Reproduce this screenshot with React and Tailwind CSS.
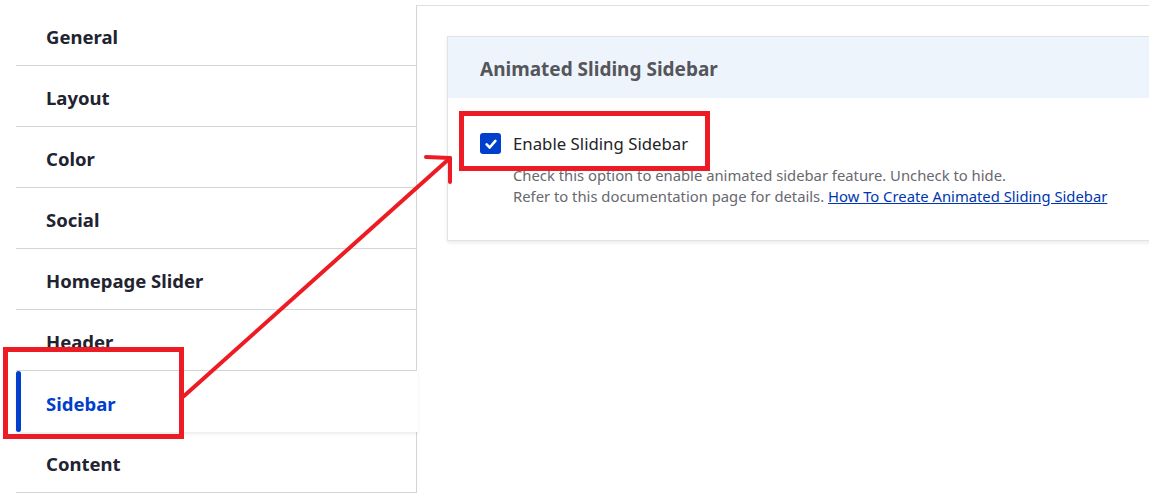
import React from "react";

const tabs = ["General", "Layout", "Color", "Social", "Homepage Slider", "Header", "Sidebar", "Content"];

function Annotations() {
  return (
    <svg className="absolute inset-0 z-20 pointer-events-none" width="1149" height="499" viewBox="0 0 1149 499">
      <g fill="none" stroke="#ed1c24" strokeLinejoin="miter">
        <rect x="5.5" y="349.5" width="176" height="87" strokeWidth="5" />
        <rect x="461.5" y="113.5" width="246" height="55" strokeWidth="5" />
        <path d="M184 396 L450 158" strokeWidth="4" strokeLinecap="round" />
        <path d="M426 157 L450 158 L450 182" strokeWidth="4" strokeLinecap="round" strokeLinejoin="round" />
      </g>
    </svg>
  );
}

export default function App() {
  const active = "Sidebar";
  return (
    <div
      className="relative flex w-[1149px] h-[499px] overflow-hidden bg-white"
      style={{ fontFamily: '"Noto Sans", "Open Sans", sans-serif' }}
    >
      <nav className="w-[417px] shrink-0 pl-4 pt-[5px]">
        {tabs.map((t) => {
          const isActive = t === active;
          return (
            <div
              key={t}
              className={
                isActive
                  ? "relative h-[61px] flex items-center pl-[30px] bg-white text-[#003ecc] shadow-[0_2px_3px_rgba(0,0,0,0.08)] z-10 -mr-px"
                  : "h-[61px] flex items-center pl-[30px] border-b border-r border-[#d4d4da] text-[#222330]"
              }
            >
              {isActive && <span className="absolute left-0 top-0 bottom-0 w-[5px] rounded-sm bg-[#003ecc]" />}
              <span className="text-[18.5px] font-bold pt-[4px]">{t}</span>
            </div>
          );
        })}
      </nav>

      <main className="flex-1 mt-[5px] border-t border-[#dedee3] pl-[30px] pt-[30px] -mr-8">
        <section className="border border-[#e2e2e8] shadow-[0_2px_4px_rgba(0,0,0,0.08)] bg-white">
          <header className="h-[61px] flex items-center px-8 pt-1 bg-[#edf4fc]">
            <h2 className="text-[19px] font-bold text-[#55565b]">Animated Sliding Sidebar</h2>
          </header>
          <div className="px-8 pt-[33px] pb-[33px]">
            <label className="flex items-center gap-3">
              <span className="w-[21px] h-[21px] rounded-[3px] bg-[#003ecc] flex items-center justify-center">
                <svg width="14" height="14" viewBox="0 0 16 16" fill="none" stroke="white" strokeWidth="3" strokeLinecap="round" strokeLinejoin="round">
                  <path d="M3 8.5 L6.5 12 L13 4.5" />
                </svg>
              </span>
              <span className="text-[16.8px] text-[#232429]">Enable Sliding Sidebar</span>
            </label>
            <div className="ml-[33px] mt-[9px] text-[14.8px] leading-[21px] text-[#68686f]">
              <p>Check this option to enable animated sidebar feature. Uncheck to hide.</p>
              <p>
                Refer to this documentation page for details.{" "}
                <a href="#" className="text-[#0036b1] underline">How To Create Animated Sliding Sidebar</a>
              </p>
            </div>
          </div>
        </section>
      </main>

      <Annotations />
    </div>
  );
}
